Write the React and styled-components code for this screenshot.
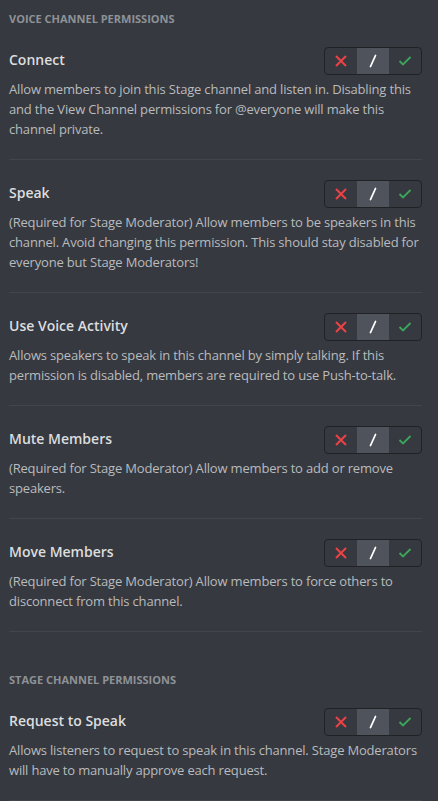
import React from 'react';
import styled, { createGlobalStyle } from 'styled-components';

const GlobalStyle = createGlobalStyle`
  html, body {
    margin: 0;
    padding: 0;
    background-color: #36393f;
  }
  body {
    font-family: 'Open Sans', 'Noto Sans', sans-serif;
  }
`;

const Page = styled.div`
  width: 438px;
  min-height: 801px;
  box-sizing: border-box;
  padding: 11px 16px 0 9px;
  background-color: #36393f;
`;

const Section = styled.section`
  & + & {
    margin-top: 40px;
  }
`;

const SectionTitle = styled.h2`
  margin: 0;
  font-size: 11px;
  line-height: 16px;
  font-weight: 700;
  text-transform: uppercase;
  color: #8e9297;
`;

const Item = styled.div`
  padding: 20px 0 20px;
  border-bottom: 1px solid #42454a;
`;

const ItemHeader = styled.div`
  display: flex;
  align-items: center;
  justify-content: space-between;
`;

const ItemTitle = styled.div`
  font-size: 14px;
  line-height: 20px;
  font-weight: 600;
  color: #dcddde;
  margin-top: -3px;
`;

const Description = styled.div`
  margin-top: 4px;
  font-size: 13px;
  line-height: 20px;
  letter-spacing: -0.18px;
  color: #b9bbbe;
`;

const Toggle = styled.div`
  display: flex;
  height: 26px;
  border: 1px solid #202225;
  border-radius: 4px;
  overflow: hidden;
`;

const Segment = styled.div`
  width: 32px;
  display: flex;
  align-items: center;
  justify-content: center;
  background-color: ${(p) => (p.$active ? '#4f545c' : 'transparent')};
`;

const DenyIcon = () => (
  <svg width="14" height="14" viewBox="0 0 14 14">
    <path d="M2 2 L12 12 M12 2 L2 12" stroke="#ed4245" strokeWidth="2" fill="none" />
  </svg>
);

const NeutralIcon = () => (
  <svg width="10" height="14" viewBox="0 0 10 14">
    <path d="M7.5 1.5 L2.5 12.5" stroke="#ffffff" strokeWidth="1.8" strokeLinecap="round" fill="none" />
  </svg>
);

const AllowIcon = () => (
  <svg width="14" height="12" viewBox="0 0 14 12">
    <path d="M1.5 6 L5 9.5 L12.5 2" stroke="#3ba55c" strokeWidth="1.8" fill="none" />
  </svg>
);

const PermissionToggle = () => (
  <Toggle>
    <Segment>
      <DenyIcon />
    </Segment>
    <Segment $active>
      <NeutralIcon />
    </Segment>
    <Segment>
      <AllowIcon />
    </Segment>
  </Toggle>
);

const sections = [
  {
    title: 'Voice Channel Permissions',
    items: [
      {
        name: 'Connect',
        desc: 'Allow members to join this Stage channel and listen in. Disabling this and the View Channel permissions for @everyone will make this channel private.',
      },
      {
        name: 'Speak',
        desc: '(Required for Stage Moderator) Allow members to be speakers in this channel. Avoid changing this permission. This should stay disabled for everyone but Stage Moderators!',
      },
      {
        name: 'Use Voice Activity',
        desc: 'Allows speakers to speak in this channel by simply talking. If this permission is disabled, members are required to use Push-to-talk.',
      },
      {
        name: 'Mute Members',
        desc: '(Required for Stage Moderator) Allow members to add or remove speakers.',
      },
      {
        name: 'Move Members',
        desc: '(Required for Stage Moderator) Allow members to force others to disconnect from this channel.',
      },
    ],
  },
  {
    title: 'Stage Channel Permissions',
    items: [
      {
        name: 'Request to Speak',
        desc: 'Allows listeners to request to speak in this channel. Stage Moderators will have to manually approve each request.',
      },
    ],
  },
];

const App = () => {
  return (
    <Page>
      <GlobalStyle />
      {sections.map((section) => (
        <Section key={section.title}>
          <SectionTitle>{section.title}</SectionTitle>
          {section.items.map((item) => (
            <Item key={item.name}>
              <ItemHeader>
                <ItemTitle>{item.name}</ItemTitle>
                <PermissionToggle />
              </ItemHeader>
              <Description>{item.desc}</Description>
            </Item>
          ))}
        </Section>
      ))}
    </Page>
  );
};

export default App;
